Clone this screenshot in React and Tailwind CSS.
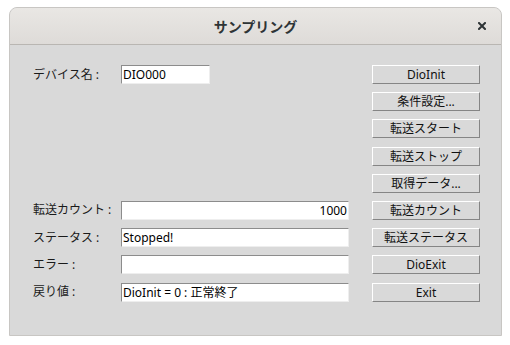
const fontStack = { fontFamily: '"Noto Sans", "Noto Sans CJK JP", sans-serif' };

const buttons = [
  "DioInit",
  "条件設定...",
  "転送スタート",
  "転送ストップ",
  "取得データ...",
  "転送カウント",
  "転送ステータス",
  "DioExit",
  "Exit",
];

const fields = {
  0: { label: "デバイス名 :", value: "DIO000", small: true },
  5: { label: "転送カウント :", value: "1000", right: true },
  6: { label: "ステータス :", value: "Stopped!" },
  7: { label: "エラー :", value: "" },
  8: { label: "戻り値 :", value: "DioInit = 0 : 正常終了" },
};

function Field({ value, small, right }) {
  return (
    <div
      className={`h-[19px] bg-white border border-t-[#8c8c8c] border-l-[#8c8c8c] border-r-[#eeeeee] border-b-[#eeeeee] text-[12px] leading-[17px] text-black px-[1px] overflow-hidden whitespace-nowrap ${
        small ? "w-[89px]" : "w-[228px]"
      } ${right ? "text-right" : "text-left"}`}
    >
      {value}
    </div>
  );
}

function Button({ children }) {
  return (
    <div className="h-[19px] w-[108px] bg-[#d9d9d9] border border-t-white border-l-white border-r-[#858585] border-b-[#858585] text-[12px] leading-[17px] text-center text-[#111]">
      {children}
    </div>
  );
}

export default function App() {
  return (
    <div className="w-[510px] h-[345px] bg-white pt-[7px] pl-[9px]" style={fontStack}>
      <div className="w-[493px] h-[329px] rounded-t-[8px] border border-[#c8c6c3] bg-[#d9d9d9] overflow-hidden">
        <div className="h-[37px] flex items-center justify-center relative bg-gradient-to-b from-[#e9e7e4] to-[#dedbd8] border-b border-[#b9b6b2]">
          <span className="text-[14px] font-bold text-[#2e3436]">サンプリング</span>
          <svg className="absolute right-[15px] top-[14px]" width="8" height="8" viewBox="0 0 8 8">
            <path d="M1 1 L7 7 M7 1 L1 7" stroke="#2e3436" strokeWidth="2" strokeLinecap="square" />
          </svg>
        </div>
        <div className="pt-[20px] pl-[23px] grid grid-cols-[88px_251px_108px] gap-y-[8.2px]">
          {buttons.map((b, i) => {
            const f = fields[i];
            return [
              <div key={`l${i}`} className="h-[19px] flex items-center text-[12px] text-[#1a1a1a] whitespace-nowrap">
                {f ? f.label : ""}
              </div>,
              <div key={`f${i}`} className="h-[19px]">
                {f ? <Field value={f.value} small={f.small} right={f.right} /> : null}
              </div>,
              <Button key={`b${i}`}>{b}</Button>,
            ];
          })}
        </div>
      </div>
    </div>
  );
}
